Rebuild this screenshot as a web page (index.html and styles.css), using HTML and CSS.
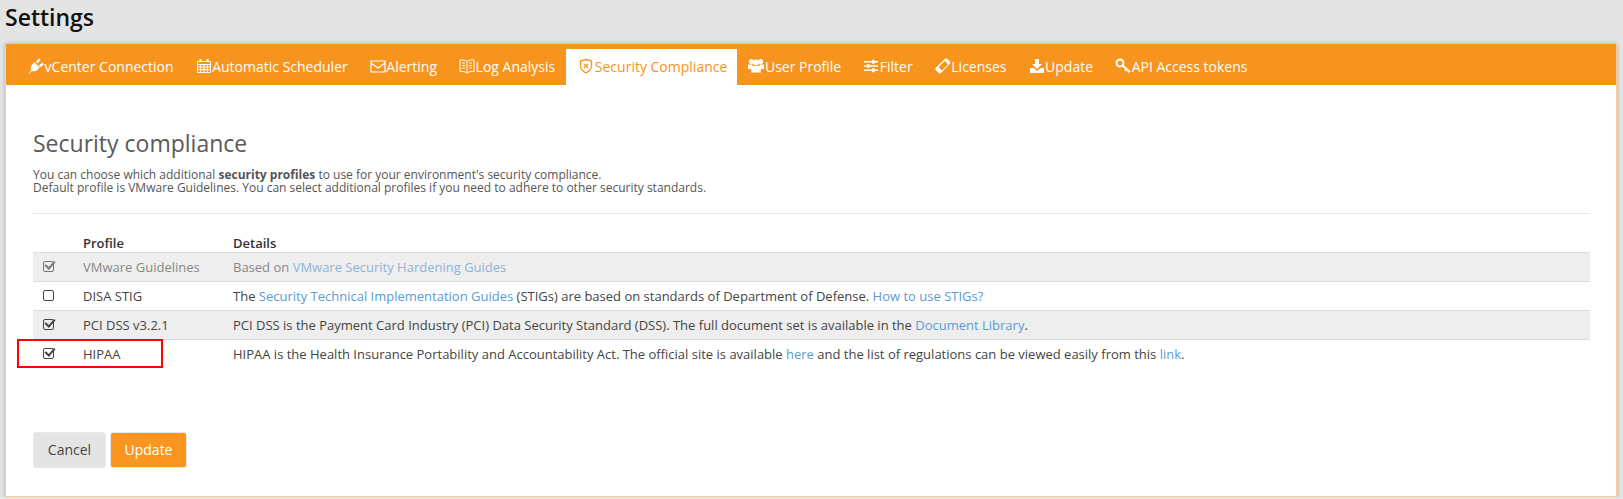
FILE: index.html
```html
<!DOCTYPE html>
<html>
<head>
	<meta charset="UTF-8">
	<title>Settings</title>
	<link rel="stylesheet" href="styles.css">
</head>
<body>
	<h1 class="title">Settings</h1>
	<div class="card">
		<ul class="tabs">
			<li><svg viewBox="0 0 16 16"><path d="M.5 15.500l2.700-3.300C2.300 10 2.800 8 4.300 6.500L6.500 4.300l5.200 5.200-2.200 2.200c-1.500 1.500-3.500 2-5.500 1.200L.9 16zM7.800 4l3-3.500 1.800 1.400-3 3.400zM10.800 7.500l3.700-3 1.400 1.700-3.400 3z" fill="#fff"/></svg>vCenter Connection</li>
			<li><svg viewBox="0 0 16 16" fill="none" stroke="#fff"><path d="M1.500 3.500h13v11h-13zM1.500 6.500h13M1.500 9h13M1.500 11.700h13M4.700 6.500v8M8 6.500v8M11.300 6.500v8"/><path d="M4.500 1v3M11.500 1v3" stroke-width="2"/></svg>Automatic Scheduler</li>
			<li><svg viewBox="0 0 16 16" fill="none" stroke="#fff" stroke-width="1.200"><path d="M1 3h14v11H1zM1 5l7 5 7-5"/></svg>Alerting</li>
			<li><svg viewBox="0 0 16 16" fill="none" stroke="#fff"><path d="M8 3.500C6 2 3.500 1.800 1 2v11.500c2.500-.2 5 0 7 1.500 2-1.500 4.500-1.700 7-1.500V2c-2.500-.2-5 0-7 1.500zM8 3.500V15M3 5h3M3 7.500h3M3 10h3M10 5h3M10 7.500h3M10 10h3"/></svg>Log Analysis</li>
			<li class="active"><svg viewBox="0 0 16 16" fill="none" stroke="#f7941e" stroke-width="1.300"><path d="M8 1.500l5.500 1.500v5c0 3-2.500 5.500-5.500 6.800C5 13.500 2.500 11 2.500 8V3z"/><path d="M6 6l4 4M10 6l-4 4"/></svg>Security Compliance</li>
			<li><svg viewBox="0 0 16 16" fill="#fff"><circle cx="3.300" cy="3.500" r="2.500"/><circle cx="12.700" cy="3.500" r="2.500"/><circle cx="8" cy="4.500" r="3"/><path d="M0 6.500h3.800L5 8h6l1.200-1.500H16V11h-3.200v3.500H3.200V11H0z"/></svg>User Profile</li>
			<li><svg viewBox="0 0 16 16" fill="#fff"><path d="M1 3h14v1.500H1zM1 7.200h14v1.500H1zM1 11.500h14V13H1z"/><path d="M9 1.800h2.500v4H9zM4 6h2.500v4H4zM9 10.200h2.500v4H9z"/></svg>Filter</li>
			<li><svg viewBox="0 0 16 16" fill="#fff" fill-rule="evenodd"><path d="M1 9.500L9.500 1.200c1-.9 2-.9 3-.1l2 1.800c1 1 1 2.100 0 3.100L6.300 14.700c-1 .9-2.100 .9-3 0l-2.100-2.100c-1-1-1-2.100-.2-3.100zM3.500 9.200l3.500 3.300 6-6.200-3.300-3.200z"/></svg>Licenses</li>
			<li><svg viewBox="0 0 16 16" fill="#fff"><path d="M6 1h4v5h3l-5 5-5-5h3z"/><path d="M1 10h3.500L8 13l3.500-3H15v5H1z"/></svg>Update</li>
			<li><svg viewBox="0 0 16 16" fill="none" stroke="#fff" stroke-width="2"><circle cx="5" cy="5" r="3.500"/><path d="M7.500 7.500l7.500 6.500M11.500 11l-1.500 2M14 13l-1 1.500"/></svg>API Access tokens</li>
		</ul>
		<div class="content">
			<h2>Security compliance</h2>
			<p class="intro">You can choose which additional <b>security profiles</b> to use for your environment's security compliance.<br>Default profile is VMware Guidelines. You can select additional profiles if you need to adhere to other security standards.</p>
			<hr>
			<table>
				<tr class="head"><th class="c1"></th><th class="c2">Profile</th><th>Details</th></tr>
				<tr class="odd off">
					<td class="c1"><span class="box on"></span></td>
					<td>VMware Guidelines</td>
					<td>Based on <a>VMware Security Hardening Guides</a></td>
				</tr>
				<tr>
					<td class="c1"><span class="box"></span></td>
					<td>DISA STIG</td>
					<td>The <a>Security Technical Implementation Guides</a> (STIGs) are based on standards of Department of Defense. <a>How to use STIGs?</a></td>
				</tr>
				<tr class="odd">
					<td class="c1"><span class="box on"></span></td>
					<td>PCI DSS v3.2.1</td>
					<td>PCI DSS is the Payment Card Industry (PCI) Data Security Standard (DSS). The full document set is available in the <a>Document Library</a>.</td>
				</tr>
				<tr class="marked">
					<td class="c1"><span class="box on"></span></td>
					<td>HIPAA</td>
					<td>HIPAA is the Health Insurance Portability and Accountability Act. The official site is available <a>here</a> and the list of regulations can be viewed easily from this <a>link</a>.</td>
				</tr>
			</table>
			<div class="buttons">
				<button class="cancel">Cancel</button>
				<button class="update">Update</button>
			</div>
		</div>
	</div>
</body>
</html>
```

FILE: styles.css
```css
*{
	padding: 0;
	margin: 0;
	box-sizing: border-box;
}
body{
	background: #e4e4e4;
	font-family: "Open Sans", "Liberation Sans", sans-serif;
	color: #444;
	overflow: hidden;
}
.title{
	height: 44px;
	padding: 2px 0 0 5px;
	font-size: 23px;
	line-height: 30px;
	font-weight: 600;
	color: #111;
}
.card{
	width: 1612px;
	height: 453px;
	margin-left: 5px;
	background: #fff;
	border: 1px solid #f9cf95;
	border-top: none;
	box-shadow: 0 0 4px #aaa;
}
.tabs{
	display: flex;
	height: 41px;
	padding: 5px 0 0 11px;
	background: #f7941e;
	list-style: none;
}
.tabs li{
	display: flex;
	align-items: center;
	gap: .6px;
	padding: 0 11px 2px;
	font-size: 14px;
	color: #fff;
}
.tabs li svg{
	width: 16px;
	height: 16px;
	flex: none;
}
.tabs .active{
	background: #fff;
	color: #f7941e;
	padding: 0 10px 2px 12px;
}
.content{
	padding: 43px 26px 0 27px;
}
h2{
	font-size: 23px;
	line-height: 30px;
	font-weight: 400;
	color: #5a5a5a;
}
.intro{
	margin-top: 10px;
	font-size: 12px;
	line-height: 13px;
	color: #555;
}
hr{
	margin-top: 19px;
	border: none;
	border-top: 1px solid #e8e8e8;
}
table{
	width: 100%;
	margin-top: 20px;
	border-collapse: collapse;
	font-size: 13px;
}
th{
	height: 18px;
	text-align: left;
	font-weight: 600;
	color: #333;
	line-height: 18px;
}
td{
	height: 29px;
	border-top: 1px solid #ddd;
	white-space: nowrap;
}
.c1{
	width: 50px;
	padding-left: 10px;
}
.c2{
	width: 150px;
}
.odd{
	background: #eee;
}
.off td{
	color: #888;
}
a{
	color: #5b9bd5;
}
.off a{
	color: #8fb4d8;
}
.box{
	position: relative;
	display: block;
	width: 11px;
	height: 11px;
	margin-top: -2px;
	border: 1.500px solid #444;
	border-radius: 2px;
}
.off .box{
	border-color: #777;
}
.box.on::after{
	content: "";
	position: absolute;
	left: 3px;
	top: -3px;
	width: 6px;
	height: 10px;
	box-sizing: border-box;
	border: solid #444;
	border-width: 0 2.500px 2.500px 0;
	transform: rotate(42deg);
}
.off .box.on::after{
	border-color: #777;
}
.marked td:first-child::before{
	content: "";
	position: absolute;
	left: 17px;
	top: 339px;
	width: 146px;
	height: 29px;
	box-sizing: border-box;
	border: 2px solid #f00;
}
.buttons{
	display: flex;
	gap: 4px;
	margin-top: 63px;
}
button{
	height: 36px;
	border: 1px solid #e8e8e8;
	border-radius: 3px;
	font-family: inherit;
	font-size: 14px;
}
.cancel{
	width: 73px;
	background: #e4e4e4;
	color: #444;
}
.update{
	width: 77px;
	background: #fb951f;
	color: #fff;
}
```
